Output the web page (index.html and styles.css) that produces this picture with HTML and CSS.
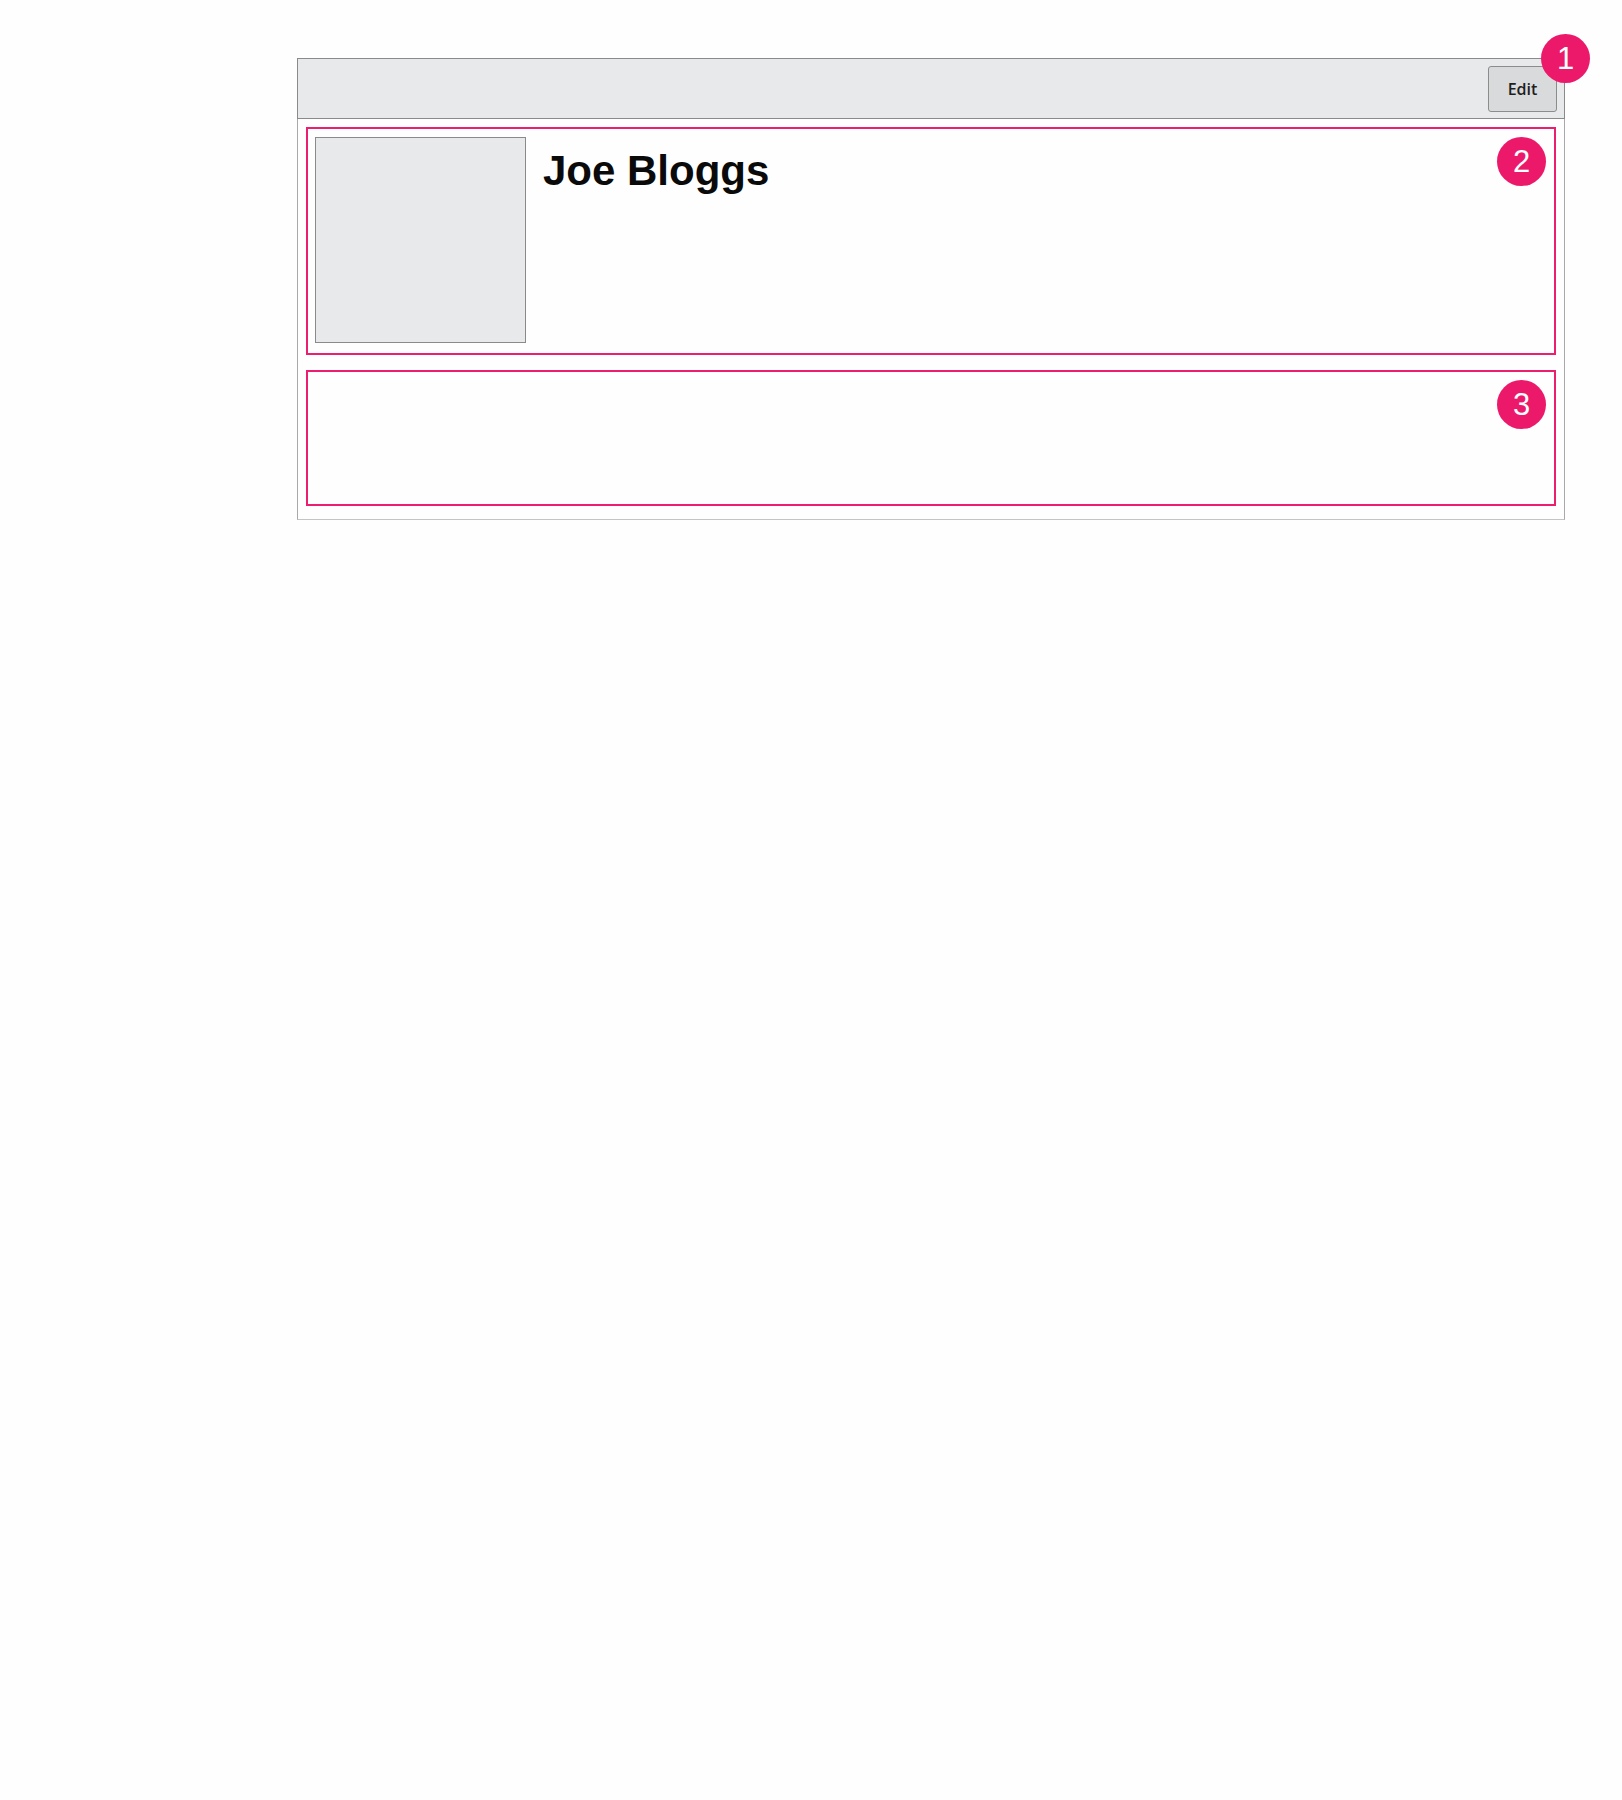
FILE: index.html
```html
<!DOCTYPE html>
<html>
<head>
<meta charset="utf-8">
<link rel="stylesheet" href="styles.css">
</head>
<body>
<div class="page">
  <div class="card">
    <div class="toolbar">
      <button class="edit-btn">Edit</button>
      <span class="badge badge-corner">1</span>
    </div>
    <div class="region region-profile">
      <div class="avatar"></div>
      <h1 class="name">Joe Bloggs</h1>
      <span class="badge badge-inner">2</span>
    </div>
    <div class="region region-details">
      <span class="badge badge-inner">3</span>
    </div>
  </div>
</div>
</body>
</html>
```

FILE: styles.css
```css
html, body {
  margin: 0;
  padding: 0;
  background: #fefefe;
}
body {
  font-family: "Liberation Sans", Arial, sans-serif;
}
.page {
  padding: 58px 0 0 297px;
}
.card {
  position: relative;
  width: 1266px;
  border: 1px solid #a9a9a9;
  border-top: none;
  border-bottom-color: #c4c4c4;
  box-sizing: content-box;
  padding-bottom: 13px;
  display: flex;
  flex-direction: column;
}
.toolbar {
  position: relative;
  height: 61px;
  background: #e8e9ea;
  border: 1px solid #8a8a8a;
  margin: 0 -1px;
  display: flex;
  justify-content: flex-end;
  align-items: flex-start;
  padding: 7px 7px 0 0;
  box-sizing: border-box;
}
.edit-btn {
  width: 69px;
  height: 46px;
  background: #d9dadc;
  border: 1px solid #8c8c8c;
  border-radius: 3px;
  font-family: "Open Sans", sans-serif;
  font-weight: 600;
  font-size: 16px;
  color: #1e1e1e;
  padding: 0;
}
.badge {
  position: absolute;
  width: 49px;
  height: 49px;
  border-radius: 50%;
  background: #ec196b;
  color: #fff;
  font-family: "Liberation Sans", Arial, sans-serif;
  font-size: 31px;
  line-height: 49px;
  text-align: center;
}
.badge-corner {
  top: -25px;
  right: -26px;
}
.badge-inner {
  top: 8px;
  right: 8px;
}
.region {
  position: relative;
  margin: 0 8px;
  border: 2px solid #ec1e6e;
}
.region-profile {
  margin-top: 8px;
  display: flex;
  align-items: flex-start;
  padding: 8px 7px;
  box-sizing: border-box;
  height: 228px;
}
.avatar {
  width: 211px;
  height: 206px;
  box-sizing: border-box;
  background: #e8e9ea;
  border: 1px solid #8a8a8a;
  flex-shrink: 0;
}
.name {
  margin: 11px 0 0 17px;
  font-size: 42px;
  font-weight: bold;
  color: #0a0a0a;
  line-height: 1.1;
}
.region-details {
  margin-top: 15px;
  height: 136px;
  box-sizing: border-box;
}
```
